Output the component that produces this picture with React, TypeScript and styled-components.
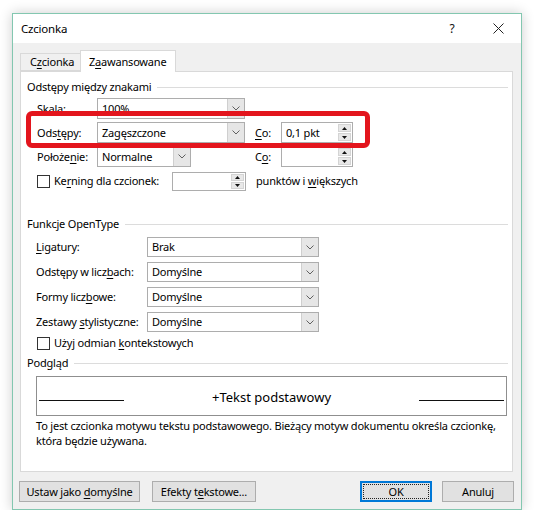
import React from "react";
import styled, { createGlobalStyle } from "styled-components";

const Global = createGlobalStyle`
  html, body { margin: 0; padding: 0; background: #ffffff; }
  body {
    font-family: "Noto Sans", "Open Sans", sans-serif;
    font-size: 11px;
    letter-spacing: -0.2px;
    color: #000;
  }
  * { box-sizing: border-box; }
`;

const Window = styled.div`
  margin: 13px 0 0 12px;
  width: 510px;
  height: 497px;
  border: 1px solid #83c7b0;
  background: #f0f0f0;
  box-shadow: 0 0 12px rgba(0, 0, 0, 0.2);
  display: flex;
  flex-direction: column;
`;

const TitleBar = styled.div`
  height: 29px;
  flex: none;
  background: #fff;
  display: flex;
  align-items: center;
  padding-left: 8px;
`;

const Title = styled.div`
  flex: 1;
  font-size: 11.5px;
  line-height: 16px;
`;

const CaptionButton = styled.div`
  width: 46px;
  height: 29px;
  display: flex;
  align-items: center;
  justify-content: center;
  font-size: 12px;
  color: #111;
`;

const Body = styled.div`
  flex: 1;
  display: flex;
  flex-direction: column;
  padding: 7px 8px 7px 7px;
`;

const TabStrip = styled.div`
  height: 21px;
  display: flex;
  align-items: flex-end;
  flex: none;
`;

const Tab = styled.div<{ $active?: boolean }>`
  position: relative;
  z-index: ${(p) => (p.$active ? 1 : 0)};
  width: ${(p) => (p.$active ? 96 : 60)}px;
  height: ${(p) => (p.$active ? 22 : 18)}px;
  margin-bottom: ${(p) => (p.$active ? -1 : 0)}px;
  padding-left: ${(p) => (p.$active ? 8 : 9)}px;
  display: flex;
  align-items: center;
  background: ${(p) => (p.$active ? "#fff" : "#f0f0f0")};
  border: 1px solid #d9d9d9;
  border-bottom: ${(p) => (p.$active ? "none" : "1px solid #d9d9d9")};
  border-right: ${(p) => (p.$active ? "1px solid #d9d9d9" : "none")};
  line-height: 16px;
  white-space: nowrap;
`;

const Panel = styled.div`
  flex: 1;
  background: #fff;
  border: 1px solid #d9d9d9;
  padding: 7px 4px 0 6px;
  display: flex;
  flex-direction: column;
`;

const GroupHeader = styled.div<{ $top?: number }>`
  display: flex;
  align-items: center;
  gap: 6px;
  height: 16px;
  line-height: 16px;
  margin-top: ${(p) => p.$top ?? 0}px;
  &::after {
    content: "";
    flex: 1;
    height: 1px;
    background: #dcdcdc;
  }
`;

const Key = styled.span`
  text-decoration: underline;
  text-underline-offset: 2px;
  text-decoration-thickness: 1px;
`;

/* ---- Character spacing group ---- */

const SpacingBlock = styled.div`
  position: relative;
  margin-top: 3px;
  padding-left: 10px;
  display: flex;
  flex-direction: column;
  gap: 3px;
`;

const SpacingGrid = styled.div`
  display: grid;
  grid-template-columns: 60px 148px 36px 72px;
  grid-auto-rows: 21px;
  row-gap: 3px;
  align-items: center;
`;

const Label = styled.div<{ $w?: number }>`
  line-height: 16px;
  white-space: nowrap;
  ${(p) => (p.$w ? `width: ${p.$w}px; flex: none;` : "")}
`;

const CoLabel = styled(Label)`
  padding-left: 10px;
`;

const SelectBox = styled.div<{ $w: number; $h?: number }>`
  width: ${(p) => p.$w}px;
  height: ${(p) => p.$h ?? 21}px;
  border: 1px solid #adadad;
  background: #fff;
  display: flex;
  align-items: stretch;
`;

const SelectValue = styled.div`
  flex: 1;
  padding-left: 4px;
  display: flex;
  align-items: center;
  line-height: 16px;
  white-space: nowrap;
  overflow: hidden;
`;

const ChevronCell = styled.div`
  width: 17px;
  flex: none;
  background: #e6e6e6;
  border-left: 1px solid #cfcfcf;
  display: flex;
  align-items: center;
  justify-content: center;
`;

const SpinBox = styled.div<{ $w: number; $h?: number }>`
  width: ${(p) => p.$w}px;
  height: ${(p) => p.$h ?? 21}px;
  border: 1px solid #adadad;
  background: #fff;
  display: flex;
  align-items: stretch;
`;

const SpinButtons = styled.div`
  width: 13px;
  flex: none;
  margin: 1px 1px 1px 0;
  display: flex;
  flex-direction: column;
  gap: 1px;
  background: #fff;
`;

const SpinHalf = styled.div`
  flex: 1;
  background: #e8e8e8;
  border: 1px solid #d4d4d4;
  display: flex;
  align-items: center;
  justify-content: center;
`;

const KerningRow = styled.div`
  display: flex;
  align-items: center;
  height: 20px;
  margin-top: 1px;
`;

const CheckRow = styled.div<{ $top?: number; $indent?: number }>`
  display: flex;
  align-items: center;
  height: 20px;
  margin-top: ${(p) => p.$top ?? 0}px;
  padding-left: ${(p) => p.$indent ?? 0}px;
`;

const CheckBox = styled.div`
  width: 13px;
  height: 13px;
  flex: none;
  border: 1px solid #333;
  background: #fff;
  margin-right: 4px;
`;

const TrailingText = styled(Label)`
  margin-left: 10px;
`;

const Highlight = styled.div`
  position: absolute;
  left: -1px;
  top: 13px;
  width: 344px;
  height: 37px;
  border: 5px solid #e3151d;
  border-radius: 6px;
  pointer-events: none;
`;

/* ---- OpenType group ---- */

const OpenTypeGrid = styled.div`
  margin-top: 5px;
  padding-left: 9px;
  display: grid;
  grid-template-columns: 111px 172px;
  grid-auto-rows: 20px;
  row-gap: 5px;
  align-items: center;
`;

/* ---- Preview group ---- */

const PreviewBox = styled.div`
  margin: 5px 1px 0 9px;
  height: 40px;
  border: 1px solid #8f8f8f;
  display: grid;
  grid-template-columns: 85px 1fr 85px;
  padding: 0 2px 0 2px;
`;

const BaseLine = styled.div`
  align-self: end;
  height: 1px;
  background: #111;
  margin-bottom: 14px;
`;

const PreviewText = styled.div`
  align-self: center;
  text-align: center;
  font-size: 13px;
  letter-spacing: 0;
  line-height: 20px;
  margin-top: 1px;
`;

const Description = styled.div`
  margin: 2px 0 0 9px;
  line-height: 15px;
  white-space: nowrap;
`;

/* ---- Bottom buttons ---- */

const ButtonRow = styled.div`
  flex: none;
  height: 21px;
  margin-top: 9px;
  display: flex;
  align-items: stretch;
`;

const Button = styled.div<{ $w: number; $gap?: number; $default?: boolean }>`
  width: ${(p) => p.$w}px;
  margin-left: ${(p) => p.$gap ?? 0}px;
  position: relative;
  background: #e1e1e1;
  border: 1px solid ${(p) => (p.$default ? "#0078d7" : "#adadad")};
  box-shadow: ${(p) => (p.$default ? "inset 0 0 0 1px #0078d7" : "none")};
  display: flex;
  align-items: center;
  justify-content: center;
  line-height: 16px;
  white-space: nowrap;
`;

const FocusRing = styled.div`
  position: absolute;
  inset: 2px;
  border: 1px dotted #222;
`;

const Spacer = styled.div`
  flex: 1;
`;

const Chevron = () => (
  <svg width="8" height="5" viewBox="0 0 8 5">
    <polyline points="0.5,0.5 4,4 7.5,0.5" fill="none" stroke="#606060" strokeWidth="1" />
  </svg>
);

const Tri = ({ up }: { up?: boolean }) => (
  <svg width="5" height="3" viewBox="0 0 5 3">
    <polygon points={up ? "0,3 5,3 2.5,0" : "0,0 5,0 2.5,3"} fill="#111" />
  </svg>
);

const Select = ({ w, h, value }: { w: number; h?: number; value?: string }) => (
  <SelectBox $w={w} $h={h}>
    <SelectValue>{value}</SelectValue>
    <ChevronCell>
      <Chevron />
    </ChevronCell>
  </SelectBox>
);

const Spin = ({ w, h, value }: { w: number; h?: number; value?: string }) => (
  <SpinBox $w={w} $h={h}>
    <SelectValue>{value}</SelectValue>
    <SpinButtons>
      <SpinHalf>
        <Tri up />
      </SpinHalf>
      <SpinHalf>
        <Tri />
      </SpinHalf>
    </SpinButtons>
  </SpinBox>
);

const CloseIcon = () => (
  <svg width="11" height="11" viewBox="0 0 11 11">
    <path d="M0.5 0.5 L10.5 10.5 M10.5 0.5 L0.5 10.5" stroke="#222" strokeWidth="1" />
  </svg>
);

export default function App() {
  return (
    <>
      <Global />
      <Window>
        <TitleBar>
          <Title>Czcionka</Title>
          <CaptionButton>?</CaptionButton>
          <CaptionButton>
            <CloseIcon />
          </CaptionButton>
        </TitleBar>
        <Body>
          <TabStrip>
            <Tab>
              C<Key>z</Key>cionka
            </Tab>
            <Tab $active>
              Z<Key>a</Key>awansowane
            </Tab>
          </TabStrip>
          <Panel>
            <GroupHeader>Odstępy między znakami</GroupHeader>
            <SpacingBlock>
              <SpacingGrid>
                <Label>Skala:</Label>
                <Select w={148} value="100%" />
                <span />
                <span />

                <Label>
                  Ods<Key>t</Key>ępy:
                </Label>
                <Select w={148} value="Zagęszczone" />
                <CoLabel>
                  <Key>C</Key>o:
                </CoLabel>
                <Spin w={72} value="0,1 pkt" />

                <Label>
                  Położe<Key>n</Key>ie:
                </Label>
                <Select w={94} value="Normalne" />
                <CoLabel>
                  C<Key>o</Key>:
                </CoLabel>
                <Spin w={72} />
              </SpacingGrid>
              <KerningRow>
                <CheckBox />
                <Label $w={118}>
                  Ke<Key>r</Key>ning dla czcionek:
                </Label>
                <Spin w={74} h={19} />
                <TrailingText>
                  punktów i <Key>w</Key>iększych
                </TrailingText>
              </KerningRow>
              <Highlight />
            </SpacingBlock>

            <GroupHeader $top={25}>Funkcje OpenType</GroupHeader>
            <OpenTypeGrid>
              <Label>
                <Key>L</Key>igatury:
              </Label>
              <Select w={172} h={20} value="Brak" />
              <Label>
                Odstępy w licz<Key>b</Key>ach:
              </Label>
              <Select w={172} h={20} value="Domyślne" />
              <Label>
                Formy licz<Key>b</Key>owe:
              </Label>
              <Select w={172} h={20} value="Domyślne" />
              <Label>
                Zestawy <Key>s</Key>tylistyczne:
              </Label>
              <Select w={172} h={20} value="Domyślne" />
            </OpenTypeGrid>
            <CheckRow $top={1} $indent={10}>
              <CheckBox />
              <Label>
                Użyj odmian <Key>k</Key>ontekstowych
              </Label>
            </CheckRow>

            <GroupHeader $top={2}>Podgląd</GroupHeader>
            <PreviewBox>
              <BaseLine />
              <PreviewText>+Tekst podstawowy</PreviewText>
              <BaseLine />
            </PreviewBox>
            <Description>
              To jest czcionka motywu tekstu podstawowego. Bieżący motyw dokumentu określa czcionkę,
              <br />
              która będzie używana.
            </Description>
          </Panel>
          <ButtonRow>
            <Button $w={121} $gap={-1}>
              Ustaw jako&nbsp;<Key>d</Key>omyślne
            </Button>
            <Button $w={104} $gap={12}>
              Efekty t<Key>e</Key>kstowe...
            </Button>
            <Spacer />
            <Button $w={72} $default>
              <FocusRing />
              OK
            </Button>
            <Button $w={72} $gap={10} style={{ marginRight: -1 }}>
              Anuluj
            </Button>
          </ButtonRow>
        </Body>
      </Window>
    </>
  );
}
